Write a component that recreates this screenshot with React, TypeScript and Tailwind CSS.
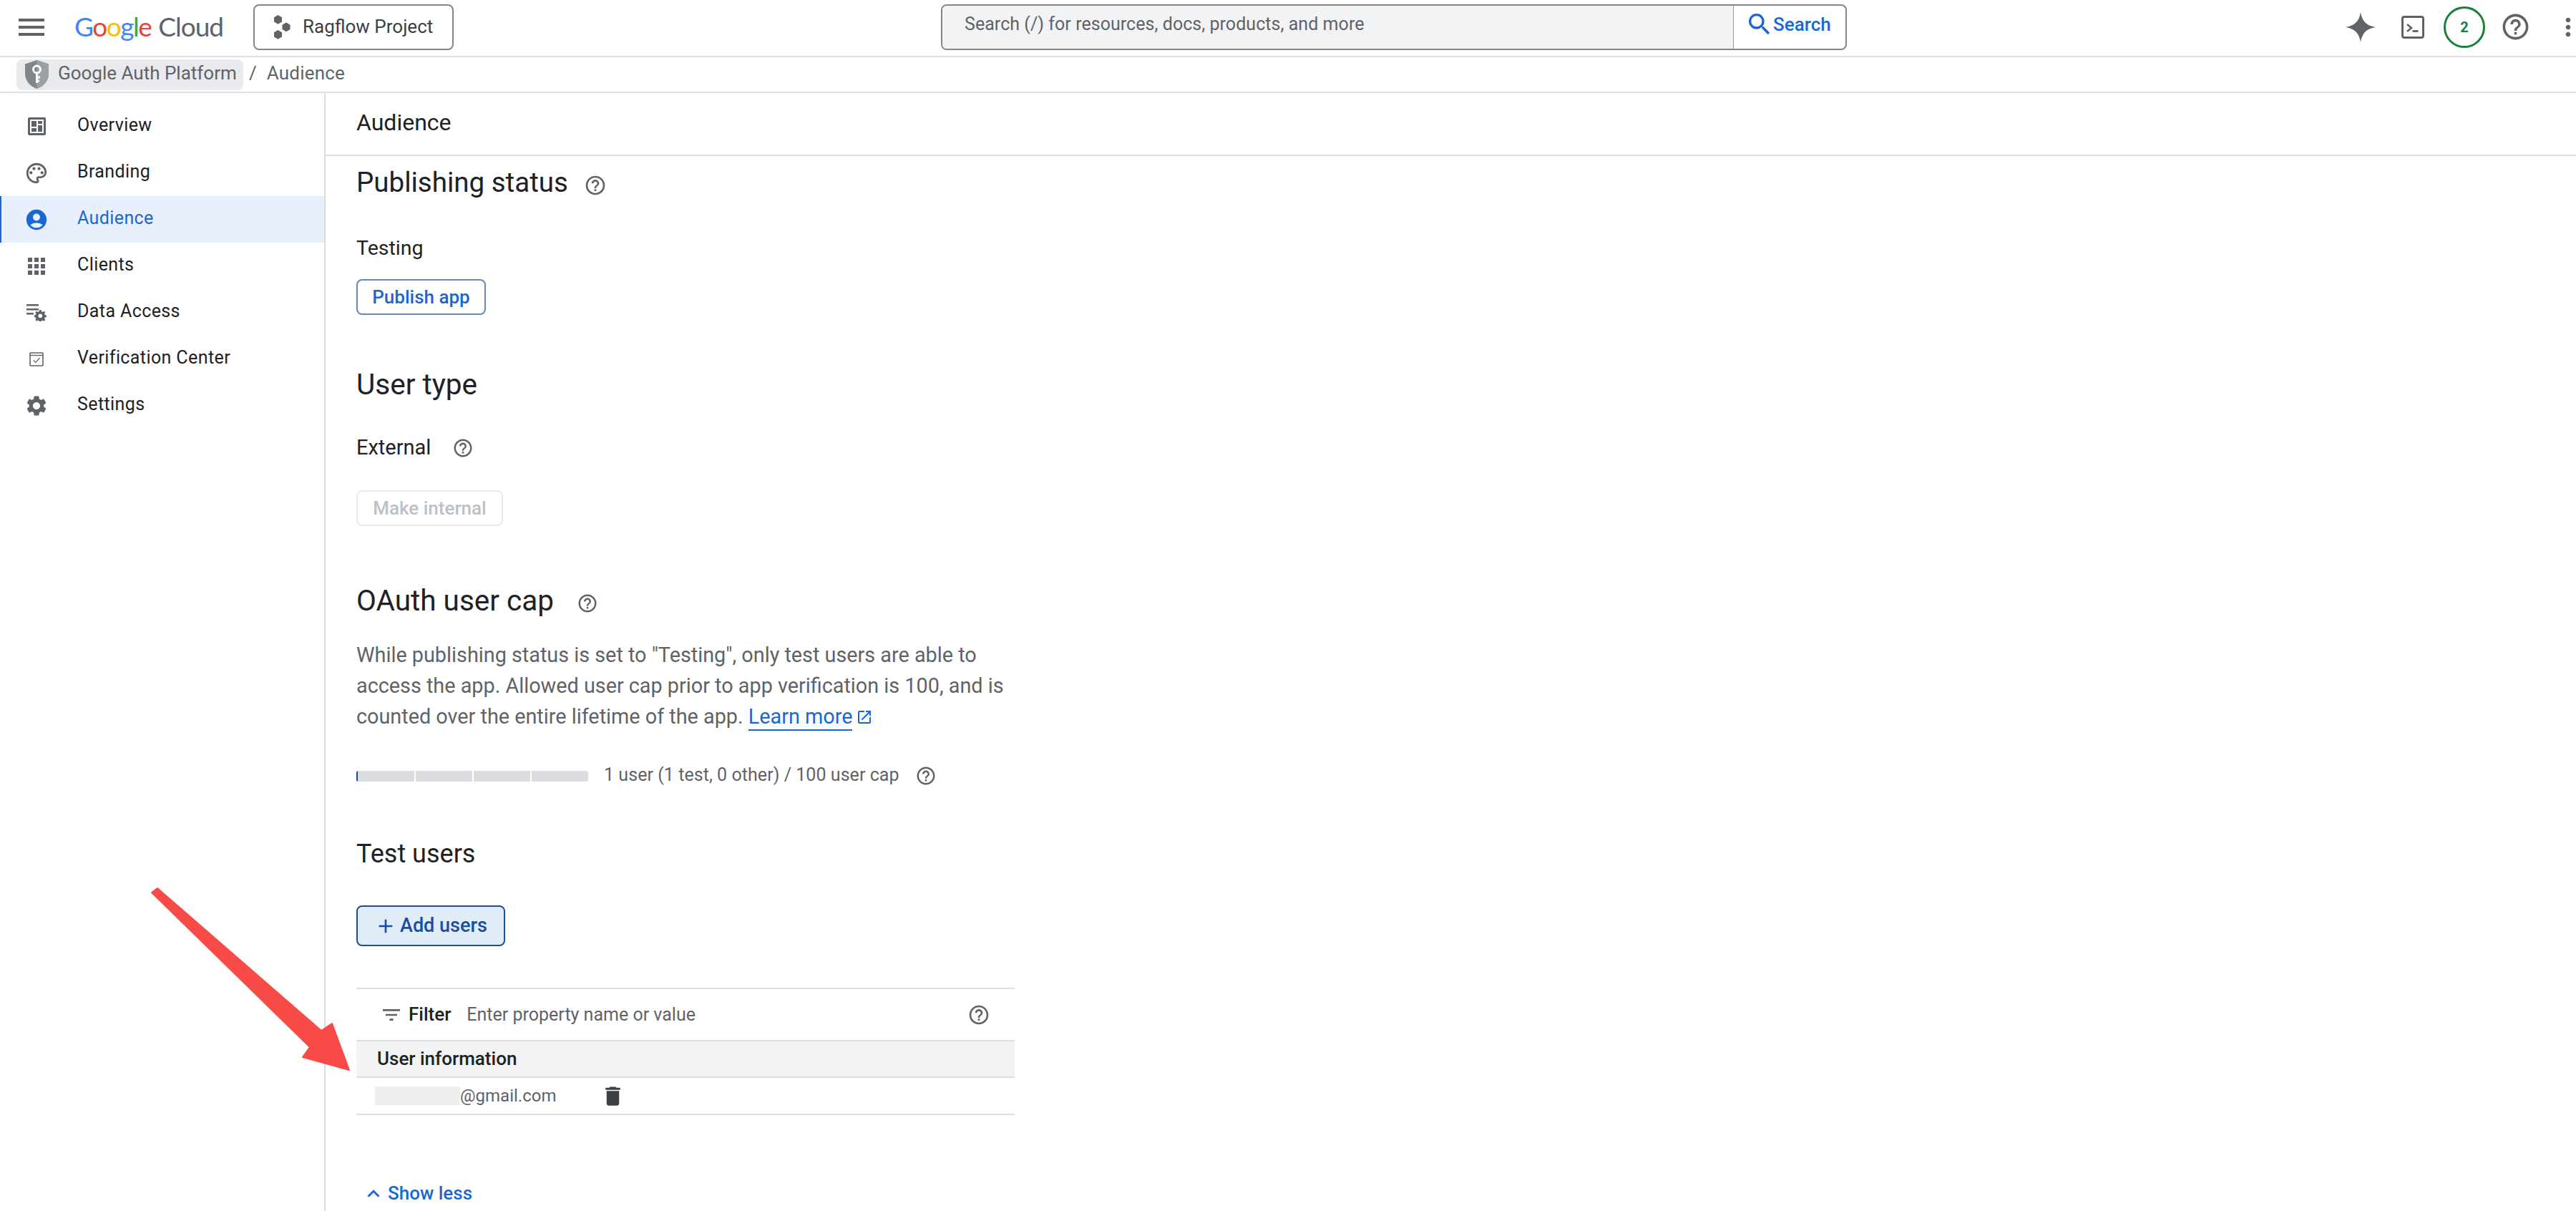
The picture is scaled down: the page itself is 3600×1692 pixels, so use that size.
import {
  MdAccountCircle,
  MdAdd,
  MdDelete,
  MdFilterList,
  MdHelpOutline,
  MdKeyboardArrowUp,
  MdMenu,
  MdMoreVert,
  MdOpenInNew,
  MdOutlinePalette,
  MdSearch,
  MdSettings,
} from "react-icons/md";

const FONT = "font-['Roboto','Liberation_Sans',sans-serif]";

function OverviewIcon() {
  return (
    <svg viewBox="0 0 25 25" className="h-[25px] w-[25px]" fill="#5f6368">
      <path
        fillRule="evenodd"
        d="M2 0h21a2 2 0 012 2v21a2 2 0 01-2 2H2a2 2 0 01-2-2V2a2 2 0 012-2zM3 3v19h19V3z"
      />
      <path d="M5 5h7v8H5zM5 15h7v5H5zM14 5h6v4h-6zM14 11h6v9h-6z" />
    </svg>
  );
}

function ClientsIcon() {
  const cells = [0, 1, 2, 3, 4, 5, 6, 7, 8];
  return (
    <div className="grid h-[24px] w-[24px] grid-cols-3 gap-[3px]">
      {cells.map((c) => (
        <div key={c} className="bg-[#5f6368]" />
      ))}
    </div>
  );
}

function DataAccessIcon() {
  return (
    <svg viewBox="0 0 28 24" className="h-[24px] w-[28px]" fill="#5f6368">
      <path d="M0 0h17v2.6H0zM0 6h17v2.6H0zM0 12h10v2.6H0z" />
      <path d="M20.5 8l.5 2.2 1.7.7 1.9-1.2 1.7 1.7-1.2 1.9.7 1.7 2.1.5v2.4l-2.1.5-.7 1.7 1.2 1.9-1.7 1.7-1.9-1.2-1.7.7-.5 2h-2.4l-.5-2-1.7-.7-1.9 1.2-1.7-1.7 1.2-1.9-.7-1.7-2-.5v-2.4l2-.5.7-1.7-1.2-1.9 1.7-1.7 1.9 1.2 1.7-.7.5-2.2zM19.3 13.5a2.8 2.8 0 100 5.6 2.8 2.8 0 000-5.6z" />
    </svg>
  );
}

function VerificationIcon() {
  return (
    <svg viewBox="0 0 20 20" className="h-[20px] w-[20px]" fill="none">
      <rect x="1" y="1" width="18" height="18" rx="1" stroke="#5f6368" strokeWidth="1.6" />
      <path d="M1 4.5h18" stroke="#5f6368" strokeWidth="1.4" />
      <path d="M6 11.5l2.8 2.8L14.5 8" stroke="#5f6368" strokeWidth="1.2" />
    </svg>
  );
}

function ShieldIcon() {
  return (
    <svg viewBox="0 0 33 40" className="h-[40px] w-[33px]">
      <path d="M16.5 0L33 5.5V19c0 10-7 17.500-16.500 21C7 36.500 0 29 0 19V5.500z" fill="#80868b" />
      <path d="M16.500 0L33 5.500V19c0 10-7 17.500-16.500 21z" fill="#9aa0a6" />
      <circle cx="16.500" cy="13" r="5" fill="none" stroke="#fff" strokeWidth="2.800" />
      <path d="M16.500 18v14M16.500 24h4.500M16.500 29h3.500" stroke="#fff" strokeWidth="2.800" fill="none" />
    </svg>
  );
}

function ProjectIcon() {
  return (
    <svg viewBox="0 0 24 34" className="h-[34px] w-[24px]" fill="#5f6368">
      <path d="M6.500 0l5.500 3.200v6.300L6.500 12.700 1 9.500V3.200z" />
      <path d="M18 10.500l5.500 3.200V20L18 23.200 12.500 20v-6.300z" />
      <path d="M6.500 21l5.500 3.200v6.300L6.500 33.700 1 30.500v-6.300z" />
    </svg>
  );
}

function Help({ className }: { className: string }) {
  return <MdHelpOutline className={`shrink-0 text-[#5f6368] ${className}`} />;
}

function NavRow({
  label,
  icon,
  active,
}: {
  label: string;
  icon: React.ReactNode;
  active?: boolean;
}) {
  return (
    <div
      className={
        active
          ? "flex h-[65px] items-center border-l-[2px] border-[#1967d2] bg-[#e8f0fe] text-[#1967d2]"
          : "flex h-[65px] items-center border-l-[2px] border-transparent text-[#202124]"
      }>
      <div className="flex w-[98px] shrink-0 justify-center">
        <div className="flex w-[34px] justify-center">{icon}</div>
      </div>
      <span className="ml-[8px] pb-[3px] text-[25px] tracking-[0.4px]">{label}</span>
    </div>
  );
}

export default function App() {
  return (
    <div className={`relative flex h-[1692px] w-[3600px] flex-col overflow-hidden bg-white ${FONT}`}>
      {/* top bar */}
      <header className="flex h-[80px] shrink-0 items-center border-b-[2px] border-[#e0e0e0] pb-[3px]">
        <MdMenu className="ml-[20px] h-[48px] w-[48px] shrink-0 text-[#5f6368]" />
        <div className="ml-[36px] flex w-[210px] shrink-0 items-baseline pb-[2px] text-[37px] leading-none tracking-[-1px]">
          <span className="font-['Lato',sans-serif] tracking-[-1.5px]">
            <span className="text-[#4285f4]">G</span>
            <span className="text-[#ea4335]">o</span>
            <span className="text-[#fbbc04]">o</span>
            <span className="text-[#4285f4]">g</span>
            <span className="text-[#34a853]">l</span>
            <span className="text-[#ea4335]">e</span>
          </span>
          <span className="ml-[10px] font-['Lato',sans-serif] text-[#5f6368]">Cloud</span>
        </div>
        <div className="ml-[40px] flex h-[64px] w-[280px] shrink-0 items-center rounded-[8px] border-[2px] border-[#80868b] pl-[26px]">
          <ProjectIcon />
          <span className="ml-[17px] text-[26px] text-[#3c4043]">Ragflow Project</span>
        </div>
        <div className="ml-[681px] flex h-[64px] w-[1266px] shrink-0 overflow-hidden rounded-[8px] border-[2px] border-[#80868b]">
          <div className="flex flex-1 items-center border-r border-[#9aa0a6] bg-[#f1f3f4] pb-[7px] pl-[31px] text-[25px] tracking-[0.05px] text-[#5f6368]">
            Search (/) for resources, docs, products, and more
          </div>
          <div className="flex w-[156px] items-center pb-[7px] pl-[16px] font-medium text-[#1967d2]">
            <MdSearch className="h-[40px] w-[40px] shrink-0" />
            <span className="-ml-[1px] text-[26px]">Search</span>
          </div>
        </div>
        <div className="ml-[697px] flex shrink-0 items-center">
          <svg viewBox="0 0 42 42" className="h-[42px] w-[42px]" fill="#5f6368">
            <path d="M21 0c1.700 12 8 19 21 21-13 2-19.300 9-21 21-1.700-12-8-19-21-21 13-2 19.300-9 21-21z" />
          </svg>
          <svg viewBox="0 0 32 32" className="ml-[36px] h-[32px] w-[32px]" fill="none">
            <rect x="1.500" y="1.500" width="29" height="29" rx="2.500" stroke="#5f6368" strokeWidth="3" />
            <path d="M8 12l6 5-6 5" stroke="#5f6368" strokeWidth="2.600" />
            <path d="M15.500 21.500h8" stroke="#5f6368" strokeWidth="2.800" />
          </svg>
          <div className="ml-[27px] flex h-[58px] w-[58px] items-center justify-center rounded-full border-[3px] border-[#188038] text-[20px] font-bold text-[#188038]">
            2
          </div>
          <MdHelpOutline className="ml-[21px] h-[43px] w-[43px] text-[#5f6368]" />
          <MdMoreVert className="ml-[32px] h-[40px] w-[40px] shrink-0 text-[#5f6368]" />
        </div>
      </header>

      {/* breadcrumb */}
      <div className="flex h-[50px] shrink-0 items-center border-b-[2px] border-[#e0e0e0] pl-[23px] text-[26px] text-[#5f6368]">
        <div className="flex h-[43px] w-[317px] items-center rounded-[8px] bg-[#e8eaed] pl-[12px]">
          <ShieldIcon />
          <span className="ml-[13px] pb-[3px]">Google Auth Platform</span>
        </div>
        <span className="ml-[8px] pb-[3px]">/</span>
        <span className="ml-[14px] pb-[3px] tracking-[0.2px]">Audience</span>
      </div>

      <div className="flex min-h-0 flex-1">
        {/* sidebar */}
        <nav className="w-[455px] shrink-0 border-r-[2px] border-[#dadce0] pt-[14px]">
          <NavRow label="Overview" icon={<OverviewIcon />} />
          <NavRow label="Branding" icon={<MdOutlinePalette className="h-[34px] w-[34px] text-[#5f6368]" />} />
          <NavRow label="Audience" active icon={<MdAccountCircle className="h-[34px] w-[34px] text-[#1967d2]" />} />
          <NavRow label="Clients" icon={<ClientsIcon />} />
          <NavRow label="Data Access" icon={<DataAccessIcon />} />
          <NavRow label="Verification Center" icon={<VerificationIcon />} />
          <NavRow label="Settings" icon={<MdSettings className="h-[34px] w-[34px] text-[#5f6368]" />} />
        </nav>

        {/* main */}
        <main className="min-w-0 flex-1">
          <div className="flex h-[88px] items-center border-b-[2px] border-[#e0e0e0] pb-[4px] pl-[43px] text-[32px] text-[#202124]">
            Audience
          </div>
          <div className="pl-[43px] text-[#202124]">
            <div className="mt-[14px] flex h-[46px] items-center">
              <h2 className="text-[38.500px]">Publishing status</h2>
              <Help className="mt-[8px] ml-[22px] h-[32px] w-[32px]" />
            </div>
            <div className="mt-[51px] text-[28.500px] leading-[36px]">Testing</div>
            <button
              type="button"
              className="mt-[25px] flex h-[50px] w-[181px] items-center justify-center rounded-[8px] border-[2px] border-[#5f89c0] text-[26px] font-medium text-[#1967d2]">
              Publish app
            </button>
            <h2 className="mt-[74px] text-[40.500px] leading-[46px]">User type</h2>
            <div className="mt-[48px] flex h-[36px] items-center">
              <span className="text-[29px]">External</span>
              <Help className="ml-[30px] h-[30px] w-[30px]" />
            </div>
            <button
              type="button"
              className="mt-[41px] flex h-[50px] w-[205px] items-center justify-center rounded-[8px] border-[2px] border-[#e8eaed] text-[26px] font-medium text-[#bdc1c6]">
              Make internal
            </button>
            <div className="mt-[81px] flex h-[46px] items-center">
              <h2 className="text-[40.500px]">OAuth user cap</h2>
              <Help className="mt-[8px] ml-[32px] h-[30px] w-[30px]" />
            </div>
            <p className="mt-[32px] w-[920px] text-[28.800px] leading-[43px] text-[#5f6368]">
              While publishing status is set to "Testing", only test users are able to access the
              app. Allowed user cap prior to app verification is 100, and is counted over the entire
              lifetime of the app.{" "}
              <span className="inline-flex items-center text-[#1967d2]">
                <span className="border-b-[2px] border-[#1967d2] leading-[36px]">Learn more</span>
                <MdOpenInNew className="ml-[5px] h-[24px] w-[24px]" />
              </span>
            </p>
            <div className="mt-[43px] flex h-[36px] items-center">
              <div className="flex h-[15px] w-[324px] gap-[2px] overflow-hidden rounded-[3px]">
                <div className="flex-1 border-l-[2px] border-[#174ea6] bg-[#dadce0]" />
                <div className="flex-1 bg-[#dadce0]" />
                <div className="flex-1 bg-[#dadce0]" />
                <div className="flex-1 bg-[#dadce0]" />
              </div>
              <span className="ml-[22px] pb-[2px] text-[25px] tracking-[0.05px] text-[#5f6368]">
                1 user (1 test, 0 other) / 100 user cap
              </span>
              <Help className="ml-[22px] h-[30px] w-[30px]" />
            </div>
            <h2 className="mt-[68px] text-[36px] leading-[46px]">Test users</h2>
            <button
              type="button"
              className="mt-[49px] flex h-[57px] w-[208px] items-center rounded-[8px] border-[2px] border-[#1a4f94] bg-[#e1ecf9] pl-[23px] text-[27px] font-medium text-[#174ea6]">
              <MdAdd className="h-[32px] w-[32px]" />
              <span className="ml-[4px]">Add users</span>
            </button>

            <div className="mt-[58px] w-[920px]">
              <div className="flex h-[75px] items-center border-y-[2px] border-[#e0e0e0] pr-[34px] pl-[33px]">
                <MdFilterList className="h-[32px] w-[32px] text-[#5f6368]" />
                <span className="ml-[8px] text-[26px] font-medium">Filter</span>
                <span className="ml-[22px] flex-1 text-[25px] text-[#5f6368]">
                  Enter property name or value
                </span>
                <Help className="h-[32px] w-[32px]" />
              </div>
              <div className="flex h-[51px] items-center border-b-[2px] border-[#dadce0] bg-[#f1f3f4] pl-[29px] text-[26px] font-medium">
                User information
              </div>
              <div className="flex h-[52px] items-center border-b-[2px] border-[#e0e0e0] pl-[26px]">
                <div className="h-[26px] w-[119px] bg-[#eeeeee]" />
                <span className="text-[24px] text-[#5f6368]">@gmail.com</span>
                <MdDelete className="ml-[62px] h-[35px] w-[35px] text-[#3c4043]" />
              </div>
            </div>
            <div className="mt-[90px] flex items-center pl-[7px] text-[26px] font-medium text-[#1967d2]">
              <MdKeyboardArrowUp className="h-[34px] w-[34px]" />
              <span className="ml-[3px]">Show less</span>
            </div>
          </div>
        </main>
      </div>

      {/* annotation arrow over the page */}
      <svg viewBox="0 0 300 280" className="absolute top-[1230px] left-[200px] h-[280px] w-[300px]">
        <path
          d="M20 11L249 210L264 200L288 265L223 247L233 233L12 17Z"
          fill="#f84b48"
          stroke="#f84b48"
          strokeWidth="2"
          strokeLinejoin="round"
        />
      </svg>
    </div>
  );
}
